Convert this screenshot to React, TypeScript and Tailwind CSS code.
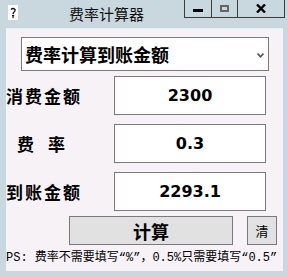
import React from "react";

const cjk = { fontFamily: '"Noto Sans CJK SC", sans-serif' };
const num = { fontFamily: '"DejaVu Sans", sans-serif' };

function Row({ label, value, labelClass }: { label: React.ReactNode; value: string; labelClass?: string }) {
  return (
    <div className="flex items-center h-[39px]">
      <div className={"w-[108px] shrink-0 text-[17px] font-bold text-black leading-none " + (labelClass ?? "")} style={cjk}>
        {label}
      </div>
      <div className="w-[152px] h-[39px] bg-white border border-[#7a7a7a] flex items-center justify-center text-[16px] font-bold text-black" style={num}>
        {value}
      </div>
    </div>
  );
}

export default function App() {
  return (
    <div className="w-[288px] h-[277px] bg-[#c9d8de] flex flex-col overflow-hidden">
      {/* title bar */}
      <div className="h-[28px] shrink-0 relative flex items-start">
        <div className="ml-[8px] mt-[5px] w-[10px] h-[15px] bg-white flex items-center justify-center">
          <svg width="8" height="12" viewBox="0 0 8 12">
            <path d="M2 2.5 Q4 0.5 6 2.5 Q6.5 4.5 4.5 5.5 L4 7" stroke="#111" strokeWidth="1.3" fill="none" />
            <rect x="3" y="8" width="2.2" height="1.6" fill="#111" />
            <rect x="3.3" y="10" width="1.6" height="1.2" fill="#555" />
          </svg>
        </div>
        <div className="ml-[51px] mt-[5px] text-[15px] leading-[18px] text-[#111]" style={cjk}>
          费率计算器
        </div>
        <div className="absolute left-[184px] top-0 w-[101px] h-[18px] flex border-l border-r border-b border-[#3c3c3c]">
          <div className="w-[27px] h-full border-r border-[#3c3c3c] flex items-center justify-center">
            <div className="w-[10px] h-[3px] bg-black mt-[3px]" />
          </div>
          <div className="w-[26px] h-full border-r border-[#3c3c3c] flex items-center justify-center">
            <div className="w-[9px] h-[7px] border-2 border-[#666]" />
          </div>
          <div className="flex-1 h-full flex items-center justify-center">
            <svg width="10" height="9" viewBox="0 0 10 9">
              <path d="M1 0.5 L9 8.5 M9 0.5 L1 8.5" stroke="#000" strokeWidth="2.4" />
            </svg>
          </div>
        </div>
      </div>

      {/* client */}
      <div className="ml-[6px] mr-[5px] h-[243px] shrink-0 bg-[#f6f2f6] border-t border-[#e8eef0] flex flex-col">
        <div className="ml-[15px] mt-[8px] w-[248px] h-[34px] bg-white border border-[#7a7a7a] flex items-center relative">
          <span className="ml-[3px] text-[18px] font-bold text-black leading-none" style={cjk}>
            费率计算到账金额
          </span>
          <svg className="absolute left-[235px] top-[15px]" width="7" height="5" viewBox="0 0 7 5">
            <path d="M0.5 0.5 L3.5 3.8 L6.5 0.5" stroke="#555" strokeWidth="1.6" fill="none" />
          </svg>
        </div>

        <div className="mt-[5px] flex flex-col gap-[9px]">
          <Row label="消费金额" value="2300" labelClass="tracking-[2px]" />
          <Row label={<span className="ml-[11px] tracking-[14px]">费率</span>} value="0.3" />
          <Row label="到账金额" value="2293.1" labelClass="tracking-[2px]" />
        </div>

        <div className="mt-[5px] flex items-center">
          <div className="ml-[63px] w-[164px] h-[29px] bg-[#e1e1e1] border border-[#7a7a7a] flex items-center justify-center text-[18px] font-bold text-black leading-none" style={cjk}>
            计算
          </div>
          <div className="ml-[14px] w-[30px] h-[29px] bg-[#e1e1e1] border border-[#7a7a7a] flex items-center justify-center text-[13px] text-black leading-none" style={cjk}>
            清
          </div>
        </div>

        <div className="mt-[6px] text-[12px] leading-[14px] text-black whitespace-nowrap" style={{ fontFamily: '"Liberation Mono", "Noto Sans CJK SC", monospace' }}>
          PS: 费率不需要填写“%”，0.5%只需要填写“0.5”
        </div>
      </div>
    </div>
  );
}
